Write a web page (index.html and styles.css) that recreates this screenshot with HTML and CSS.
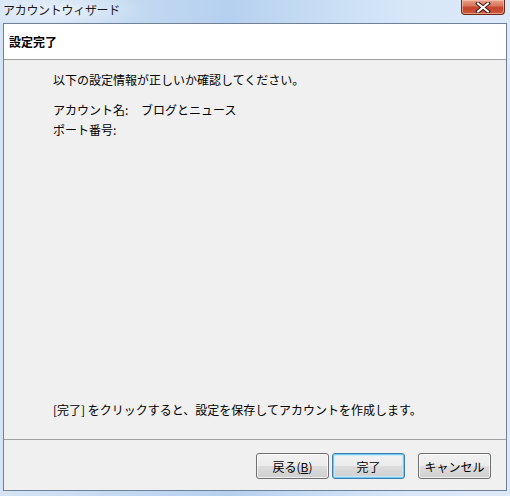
FILE: index.html
```html
<!DOCTYPE html>
<html lang="ja">
<head>
<meta charset="utf-8">
<title>アカウントウィザード</title>
<link rel="stylesheet" href="styles.css">
</head>
<body>
<div class="window">
  <div class="titlebar">
    <span class="title">アカウントウィザード</span>
    <div class="close" aria-label="閉じる">
      <svg width="16" height="11" viewBox="0 0 16 11">
        <path d="M3 1.5 L13 9.5 M13 1.5 L3 9.5" stroke="#3a1a14" stroke-width="4" stroke-linecap="square"/>
        <path d="M3 1.5 L13 9.5 M13 1.5 L3 9.5" stroke="#ffffff" stroke-width="2" stroke-linecap="square"/>
      </svg>
    </div>
  </div>
  <div class="client">
    <div class="header">設定完了</div>
    <div class="content">
      <p class="intro">以下の設定情報が正しいか確認してください。</p>
      <div class="summary">
        <span>アカウント名:</span><span>ブログとニュース</span>
        <span>ポート番号:</span><span></span>
      </div>
      <p class="note">[完了] をクリックすると、設定を保存してアカウントを作成します。</p>
    </div>
    <div class="footer">
      <button class="btn">戻る(<u>B</u>)</button>
      <button class="btn default">完了</button>
      <button class="btn cancel">キャンセル</button>
    </div>
  </div>
</div>
</body>
</html>
```

FILE: styles.css
```css
* { box-sizing: border-box; }
html, body {
  margin: 0;
  padding: 0;
  width: 510px;
  height: 496px;
  overflow: hidden;
  font-family: "Noto Sans CJK JP", "Noto Sans", sans-serif;
  font-size: 12px;
  color: #000;
}
.window {
  width: 510px;
  height: 496px;
  display: flex;
  flex-direction: column;
  background:
    radial-gradient(ellipse 90px 20px at 60px 10px, rgba(255,255,255,0.55), rgba(255,255,255,0) 100%),
    linear-gradient(to right, #d5e4f5 0%, #c3d9f1 25%, #b5d0ef 45%, #c5dbf3 60%, #d7e7f8 80%, #dce9f8 100%);
}
.titlebar {
  height: 23px;
  display: flex;
  align-items: flex-start;
  justify-content: space-between;
  padding: 0 5px 0 3px;
}
.title {
  line-height: 20px;
  font-size: 12px;
  color: #1a1a1a;
  letter-spacing: -0.3px;
}
.close {
  width: 44px;
  height: 15px;
  margin-top: 0;
  border: 1px solid #6b2a1e;
  border-top: none;
  border-radius: 0 0 4px 4px;
  background: linear-gradient(to bottom, #e8a18e 0%, #d9765d 40%, #c4442a 55%, #cd5a3e 100%);
  box-shadow: inset 0 0 0 1px rgba(255,210,190,0.55);
  display: flex;
  align-items: center;
  justify-content: center;
}
.close svg { display: block; }
.client {
  margin: 0 3px;
  height: 468px;
  border: 1px solid #6f8196;
  background: #f0f0f0;
  display: flex;
  flex-direction: column;
}
.header {
  height: 36px;
  background: #fff;
  border-bottom: 1px solid #a0a0a0;
  padding-left: 5px;
  display: flex;
  align-items: center;
  font-weight: bold;
}
.content {
  flex: 1;
  display: flex;
  flex-direction: column;
  padding: 10px 20px 19px 49px;
}
.content p { margin: 0; line-height: 20px; }
.summary {
  margin-top: 10px;
  display: grid;
  grid-template-columns: 88px 1fr;
  line-height: 20px;
}
.note { margin-top: auto !important; }
.footer {
  height: 51px;
  border-top: 1px solid #a0a0a0;
  display: flex;
  justify-content: flex-end;
  align-items: flex-start;
  padding: 13px 15px 0 0;
}
.btn {
  width: 73px;
  height: 26px;
  font-family: inherit;
  font-size: 12px;
  color: #000;
  border: 1px solid #707070;
  border-radius: 3px;
  background: linear-gradient(to bottom, #f2f2f2 0%, #ebebeb 50%, #dddddd 50%, #cfcfcf 100%);
  box-shadow: inset 0 0 0 1px rgba(255,255,255,0.7);
  padding: 0;
  margin: 0;
}
.btn u { text-decoration: underline; }
.btn.default {
  margin-left: 3px;
  border-color: #3c7fb1;
  background: linear-gradient(to bottom, #eaf6fd 0%, #d9f0fc 50%, #bee6fd 50%, #a7d9f5 100%);
  box-shadow: inset 0 0 0 1px #9ad4f5, inset 0 0 0 2px rgba(255,255,255,0.5);
  background: linear-gradient(to bottom, #f2f2f2 0%, #ebebeb 50%, #dddddd 50%, #cfcfcf 100%);
  box-shadow: inset 0 0 0 1px #73c7f0, inset 0 0 0 2px rgba(200,235,252,0.8);
}
.btn.cancel { margin-left: 13px; }
```
